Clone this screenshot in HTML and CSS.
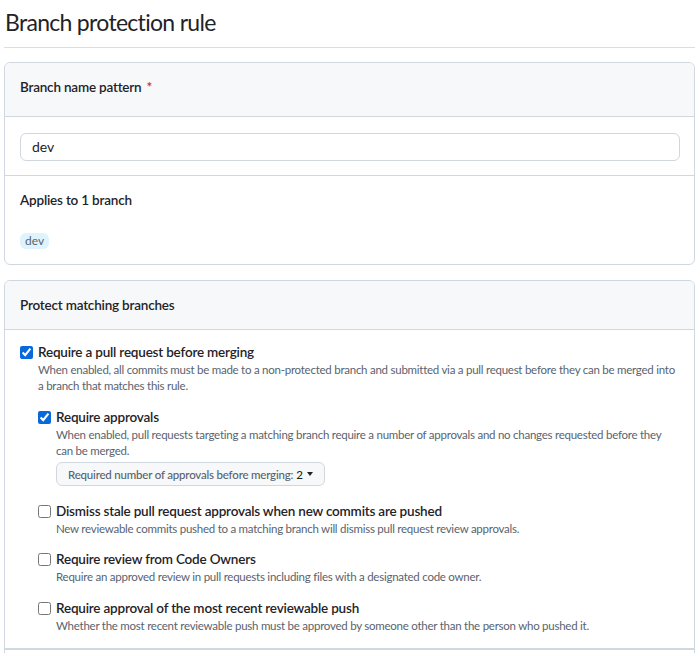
FILE: index.html
```html
<!DOCTYPE html>
<html lang="en">
<head>
<meta charset="utf-8">
<title>Branch protection rule</title>
<link rel="stylesheet" href="styles.css">
</head>
<body>
<div class="page">
  <h1 class="page-title">Branch protection rule</h1>

  <div class="card">
    <div class="card-header card-header-first">
      <span class="label">Branch name pattern</span><span class="required">*</span>
    </div>
    <div class="card-section input-section">
      <div class="text-input">dev</div>
    </div>
    <div class="card-section applies-section">
      <div class="label">Applies to 1 branch</div>
      <div class="badges"><span class="branch-badge">dev</span></div>
    </div>
  </div>

  <div class="card card-second">
    <div class="card-header card-header-second">
      <span class="label">Protect matching branches</span>
    </div>
    <div class="card-section options">
      <div class="option">
        <div class="option-row">
          <input type="checkbox" class="check" checked>
          <span class="option-title">Require a pull request before merging</span>
        </div>
        <p class="option-desc">When enabled, all commits must be made to a non-protected branch and submitted via a pull request before they can be merged into a branch that matches this rule.</p>

        <div class="nested">
          <div class="option">
            <div class="option-row">
              <input type="checkbox" class="check" checked>
              <span class="option-title">Require approvals</span>
            </div>
            <p class="option-desc">When enabled, pull requests targeting a matching branch require a number of approvals and no changes requested before they can be merged.</p>
            <button class="select-btn" type="button"><span class="muted">Required number of approvals before merging:</span> <span class="value">2</span><span class="caret"></span></button>
          </div>

          <div class="option option-after-btn">
            <div class="option-row">
              <input type="checkbox" class="check">
              <span class="option-title">Dismiss stale pull request approvals when new commits are pushed</span>
            </div>
            <p class="option-desc">New reviewable commits pushed to a matching branch will dismiss pull request review approvals.</p>
          </div>

          <div class="option option-tight">
            <div class="option-row">
              <input type="checkbox" class="check">
              <span class="option-title">Require review from Code Owners</span>
            </div>
            <p class="option-desc">Require an approved review in pull requests including files with a designated code owner.</p>
          </div>

          <div class="option option-normal">
            <div class="option-row">
              <input type="checkbox" class="check">
              <span class="option-title">Require approval of the most recent reviewable push</span>
            </div>
            <p class="option-desc">Whether the most recent reviewable push must be approved by someone other than the person who pushed it.</p>
          </div>
        </div>
      </div>
    </div>
    <div class="card-section next-section"></div>
  </div>
</div>
</body>
</html>
```
FILE: styles.css
```css
html, body {
  margin: 0;
  padding: 0;
  background: #ffffff;
}

body {
  font-family: "Lato", "Liberation Sans", sans-serif;
  color: #1f2328;
  font-size: 14px;
}

.page {
  padding: 0 5px 0 4px;
}

.page-title {
  margin: 0;
  padding: 7px 0 10px 1px;
  font-size: 23px;
  letter-spacing: -0.7px;
  line-height: 30px;
  font-weight: 400;
  border-bottom: 1px solid #d8dee4;
}

.card {
  margin-top: 14px;
  border: 1px solid #d0d7de;
  border-radius: 6px;
  overflow: hidden;
}

.card-second {
  margin-top: 15px;
}

.card-header {
  box-sizing: border-box;
  display: flex;
  align-items: center;
  background: #f6f8fa;
  border-bottom: 1px solid #d0d7de;
  padding: 0 15px;
}

.card-header-first {
  height: 54px;
  padding-bottom: 5px;
}

.card-header-second {
  height: 49px;
}

.label {
  font-size: 13.5px;
  letter-spacing: -0.2px;
  font-weight: 600;
  line-height: 21px;
}

.required {
  color: #d1242f;
  font-size: 13.5px;
  font-weight: 600;
  line-height: 21px;
  margin-left: 5px;
}

.card-section {
  border-bottom: 1px solid #d0d7de;
}

.card-section:last-child {
  border-bottom: 0;
}

.input-section {
  padding: 16px 14px 14px 15px;
}

.text-input {
  height: 26px;
  border: 1px solid #d0d7de;
  border-radius: 6px;
  padding: 0 11px;
  font-size: 14px;
  line-height: 26px;
  color: #1f2328;
}

.applies-section {
  padding: 14px 15px 15px;
}

.badges {
  margin-top: 22px;
  display: flex;
}

.branch-badge {
  background: #ddf4ff;
  color: #59636e;
  font-size: 12px;
  line-height: 16px;
  padding: 0 5px;
  border-radius: 6px;
}

.options {
  padding: 13px 15px 14px;
}

.option-row {
  display: flex;
  align-items: center;
  gap: 5px;
  height: 19px;
}

.check {
  margin: 0;
  width: 13px;
  height: 13px;
  accent-color: #0969da;
  flex: none;
}

.option-title {
  font-size: 13.5px;
  letter-spacing: -0.2px;
  font-weight: 600;
  line-height: 19px;
}

.option-desc {
  margin: 0;
  padding-left: 18px;
  font-size: 11.5px;
  letter-spacing: -0.25px;
  line-height: 16px;
  color: #59636e;
}

.nested {
  padding-left: 18px;
  margin-top: 14px;
  display: flex;
  flex-direction: column;
}

.option-after-btn {
  margin-top: 16px;
}

.option-tight {
  margin-top: 13px;
}

.option-normal {
  margin-top: 14px;
}

.select-btn {
  box-sizing: border-box;
  margin: 3px 0 0 18px;
  height: 24px;
  padding: 0 11px;
  background: #f6f8fa;
  border: 1px solid #d0d7de;
  border-radius: 6px;
  font-family: inherit;
  font-size: 11.5px;
  letter-spacing: -0.2px;
  font-weight: 500;
  display: inline-flex;
  align-items: center;
}

.muted {
  color: #59636e;
  margin-right: 3px;
}

.value {
  color: #1f2328;
}

.caret {
  display: inline-block;
  width: 0;
  height: 0;
  margin-left: 4px;
  border-top: 4px solid #1f2328;
  border-left: 3.5px solid transparent;
  border-right: 3.5px solid transparent;
}

.next-section {
  height: 8px;
  border-top: 1px solid #d0d7de;
}
```
